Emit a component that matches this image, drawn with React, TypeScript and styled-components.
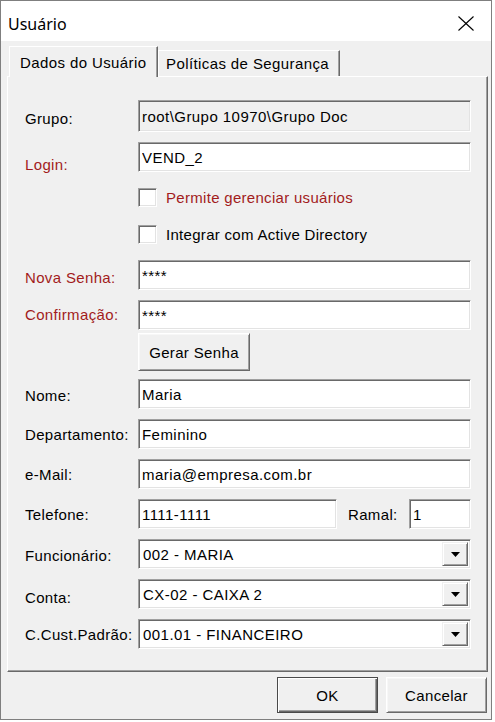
import React from "react";
import styled, { createGlobalStyle } from "styled-components";

const GlobalStyle = createGlobalStyle`
  html, body { margin: 0; padding: 0; background: #ffffff; }
  body { font-family: "Liberation Sans", Arial, sans-serif; }
  * { box-sizing: border-box; }
`;

const FONT = `"Liberation Sans", Arial, sans-serif`;

const Window = styled.div`
  width: 492px;
  height: 720px;
  border: 1px solid #7f7f7f;
  background: #f0f0f0;
  display: flex;
  flex-direction: column;
`;

const TitleBar = styled.div`
  flex: 0 0 40px;
  height: 40px;
  background: #ffffff;
  display: flex;
  align-items: center;
  justify-content: space-between;
  padding: 5px 17px 0 7px;
`;

const Title = styled.span`
  font-family: "Noto Sans", "Open Sans", sans-serif;
  font-size: 16px;
  color: #000;
`;

const CloseIcon = styled.svg`
  display: block;
  width: 16px;
  height: 15px;
`;

const Body = styled.div`
  flex: 1;
  display: flex;
  flex-direction: column;
  padding: 5px 3px 0 6px;
`;

const TabStrip = styled.div`
  height: 30px;
  display: flex;
  align-items: flex-end;
  padding-left: 2px;
  position: relative;
  z-index: 1;
`;

const Tab = styled.div<{ $active?: boolean; $w: number }>`
  width: ${(p) => p.$w}px;
  height: ${(p) => (p.$active ? 31 : 26)}px;
  margin-bottom: ${(p) => (p.$active ? -1 : 0)}px;
  background: #f0f0f0;
  border-top: 1px solid #ffffff;
  border-left: 1px solid #ffffff;
  border-right: 1px solid #696969;
  box-shadow: inset -1px 0 0 #a0a0a0;
  display: flex;
  align-items: center;
  padding-left: ${(p) => (p.$active ? 10 : 7)}px;
  font-family: ${FONT};
  font-size: 15px;
  letter-spacing: 0.4px;
  color: #000;
  white-space: nowrap;
`;

const Panel = styled.div`
  height: 596px;
  flex: 0 0 596px;
  background: #f0f0f0;
  border-top: 1px solid #ffffff;
  border-left: 1px solid #ffffff;
  border-right: 1px solid #696969;
  border-bottom: 1px solid #696969;
  box-shadow: inset -1px -1px 0 #a0a0a0;
  display: flex;
  flex-direction: column;
  padding: 23px 16px 0 17px;
`;

const Row = styled.div<{ $mt: number }>`
  display: flex;
  align-items: flex-start;
  margin-top: ${(p) => p.$mt}px;
`;

const IndentRow = styled.div<{ $mt: number }>`
  display: flex;
  align-items: center;
  margin-top: ${(p) => p.$mt}px;
  padding-left: 113px;
`;

const Label = styled.label<{ $red?: boolean; $dy?: number }>`
  flex: 0 0 113px;
  height: 30px;
  line-height: 30px;
  padding-top: ${(p) => p.$dy ?? 1}px;
  font-family: ${FONT};
  font-size: 15px;
  letter-spacing: 0.35px;
  color: ${(p) => (p.$red ? "#a21c1c" : "#000")};
  white-space: nowrap;
`;

const SubLabel = styled(Label)`
  flex: 0 0 72px;
  padding-left: 11px;
`;

const Field = styled.input<{ $h?: number; $disabled?: boolean; $w?: number }>`
  flex: ${(p) => (p.$w ? `0 0 ${p.$w}px` : "1 1 auto")};
  width: ${(p) => (p.$w ? `${p.$w}px` : "auto")};
  min-width: 0;
  height: ${(p) => p.$h ?? 30}px;
  margin: 0;
  padding: 0 3px;
  border: 1px solid;
  border-color: #a0a0a0 #ffffff #ffffff #a0a0a0;
  box-shadow: inset 1px 1px 0 #696969, inset -1px -1px 0 #e3e3e3;
  background: ${(p) => (p.$disabled ? "#f0f0f0" : "#ffffff")};
  font-family: ${FONT};
  font-size: 15px;
  letter-spacing: 0.45px;
  color: #000;
  outline: none;
`;

const Combo = styled.div`
  flex: 1 1 auto;
  height: 30px;
  display: flex;
  align-items: stretch;
  padding: 2px;
  border: 1px solid;
  border-color: #a0a0a0 #ffffff #ffffff #a0a0a0;
  box-shadow: inset 1px 1px 0 #696969, inset -1px -1px 0 #e3e3e3;
  background: #ffffff;
`;

const ComboText = styled.div`
  flex: 1;
  display: flex;
  align-items: center;
  padding-left: 2px;
  font-family: ${FONT};
  font-size: 15px;
  letter-spacing: 0.45px;
  color: #000;
  white-space: nowrap;
`;

const DropButton = styled.div`
  flex: 0 0 26px;
  display: flex;
  align-items: center;
  justify-content: center;
  background: #f0f0f0;
  border: 1px solid;
  border-color: #f0f0f0 #696969 #696969 #f0f0f0;
  box-shadow: inset 1px 1px 0 #ffffff, inset -1px -1px 0 #a0a0a0;
`;

const Arrow = styled.svg`
  display: block;
  width: 9px;
  height: 5px;
  margin-top: 1px;
`;

const CheckBox = styled.span`
  flex: 0 0 19px;
  width: 19px;
  height: 19px;
  border: 1px solid;
  border-color: #a0a0a0 #ffffff #ffffff #a0a0a0;
  box-shadow: inset 1px 1px 0 #696969, inset -1px -1px 0 #e3e3e3;
  background: #ffffff;
`;

const CheckText = styled.span<{ $red?: boolean }>`
  margin-left: 9px;
  font-family: ${FONT};
  font-size: 15px;
  letter-spacing: 0.3px;
  color: ${(p) => (p.$red ? "#a21c1c" : "#000")};
  white-space: nowrap;
`;

const Button = styled.button<{ $w: number; $h: number; $default?: boolean }>`
  width: ${(p) => p.$w}px;
  height: ${(p) => p.$h}px;
  margin: 0;
  padding: 0;
  background: #f0f0f0;
  border: 1px solid;
  border-color: ${(p) =>
    p.$default ? "#4a4a4a" : "#ffffff #696969 #696969 #ffffff"};
  box-shadow: ${(p) =>
    p.$default
      ? "inset 1px 1px 0 #ffffff, inset -1px -1px 0 #696969, inset -2px -2px 0 #a0a0a0"
      : "inset 1px 1px 0 #f7f7f7, inset -1px -1px 0 #a0a0a0"};
  font-family: ${FONT};
  font-size: 15px;
  letter-spacing: 0.35px;
  color: #000;
  cursor: default;
`;

const Footer = styled.div`
  display: flex;
  justify-content: flex-end;
  gap: 8px;
  margin-top: 5px;
  padding-right: 1px;
`;

function ComboBox({ value }: { value: string }) {
  return (
    <Combo>
      <ComboText>{value}</ComboText>
      <DropButton>
        <Arrow viewBox="0 0 9 5">
          <polygon points="0,0 9,0 4.5,5" fill="#000" />
        </Arrow>
      </DropButton>
    </Combo>
  );
}

export default function App() {
  return (
    <>
      <GlobalStyle />
      <Window>
        <TitleBar>
          <Title>Usuário</Title>
          <CloseIcon viewBox="0 0 16 15">
            <line x1="0.5" y1="0.5" x2="15.5" y2="14.5" stroke="#000" strokeWidth="1.1" />
            <line x1="15.5" y1="0.5" x2="0.5" y2="14.5" stroke="#000" strokeWidth="1.1" />
          </CloseIcon>
        </TitleBar>
        <Body>
          <TabStrip>
            <Tab $active $w={149}>Dados do Usuário</Tab>
            <Tab $w={182}>Políticas de Segurança</Tab>
          </TabStrip>
          <Panel>
            <Row $mt={0}>
              <Label $dy={4}>Grupo:</Label>
              <Field $h={32} $disabled readOnly value={"root\\Grupo 10970\\Grupo Doc"} />
            </Row>
            <Row $mt={10}>
              <Label $red $dy={8}>Login:</Label>
              <Field readOnly value="VEND_2" />
            </Row>
            <IndentRow $mt={16}>
              <CheckBox />
              <CheckText $red>Permite gerenciar usuários</CheckText>
            </IndentRow>
            <IndentRow $mt={18}>
              <CheckBox />
              <CheckText>Integrar com Active Directory</CheckText>
            </IndentRow>
            <Row $mt={16}>
              <Label $red $dy={3}>Nova Senha:</Label>
              <Field readOnly value="****" />
            </Row>
            <Row $mt={10}>
              <Label $red $dy={0}>Confirmação:</Label>
              <Field readOnly value="****" />
            </Row>
            <IndentRow $mt={3}>
              <Button $w={112} $h={38}>Gerar Senha</Button>
            </IndentRow>
            <Row $mt={8}>
              <Label $dy={2}>Nome:</Label>
              <Field readOnly value="Maria" />
            </Row>
            <Row $mt={10}>
              <Label>Departamento:</Label>
              <Field readOnly value="Feminino" />
            </Row>
            <Row $mt={10}>
              <Label>e-Mail:</Label>
              <Field readOnly value="maria@empresa.com.br" />
            </Row>
            <Row $mt={10}>
              <Label>Telefone:</Label>
              <Field $w={199} readOnly value="1111-1111" />
              <SubLabel>Ramal:</SubLabel>
              <Field readOnly value="1" />
            </Row>
            <Row $mt={10}>
              <Label $dy={2}>Funcionário:</Label>
              <ComboBox value="002 - MARIA" />
            </Row>
            <Row $mt={10}>
              <Label $dy={4}>Conta:</Label>
              <ComboBox value="CX-02 - CAIXA 2" />
            </Row>
            <Row $mt={10}>
              <Label>C.Cust.Padrão:</Label>
              <ComboBox value="001.01 - FINANCEIRO" />
            </Row>
          </Panel>
          <Footer>
            <Button $w={101} $h={36} $default>OK</Button>
            <Button $w={101} $h={36}>Cancelar</Button>
          </Footer>
        </Body>
      </Window>
    </>
  );
}
